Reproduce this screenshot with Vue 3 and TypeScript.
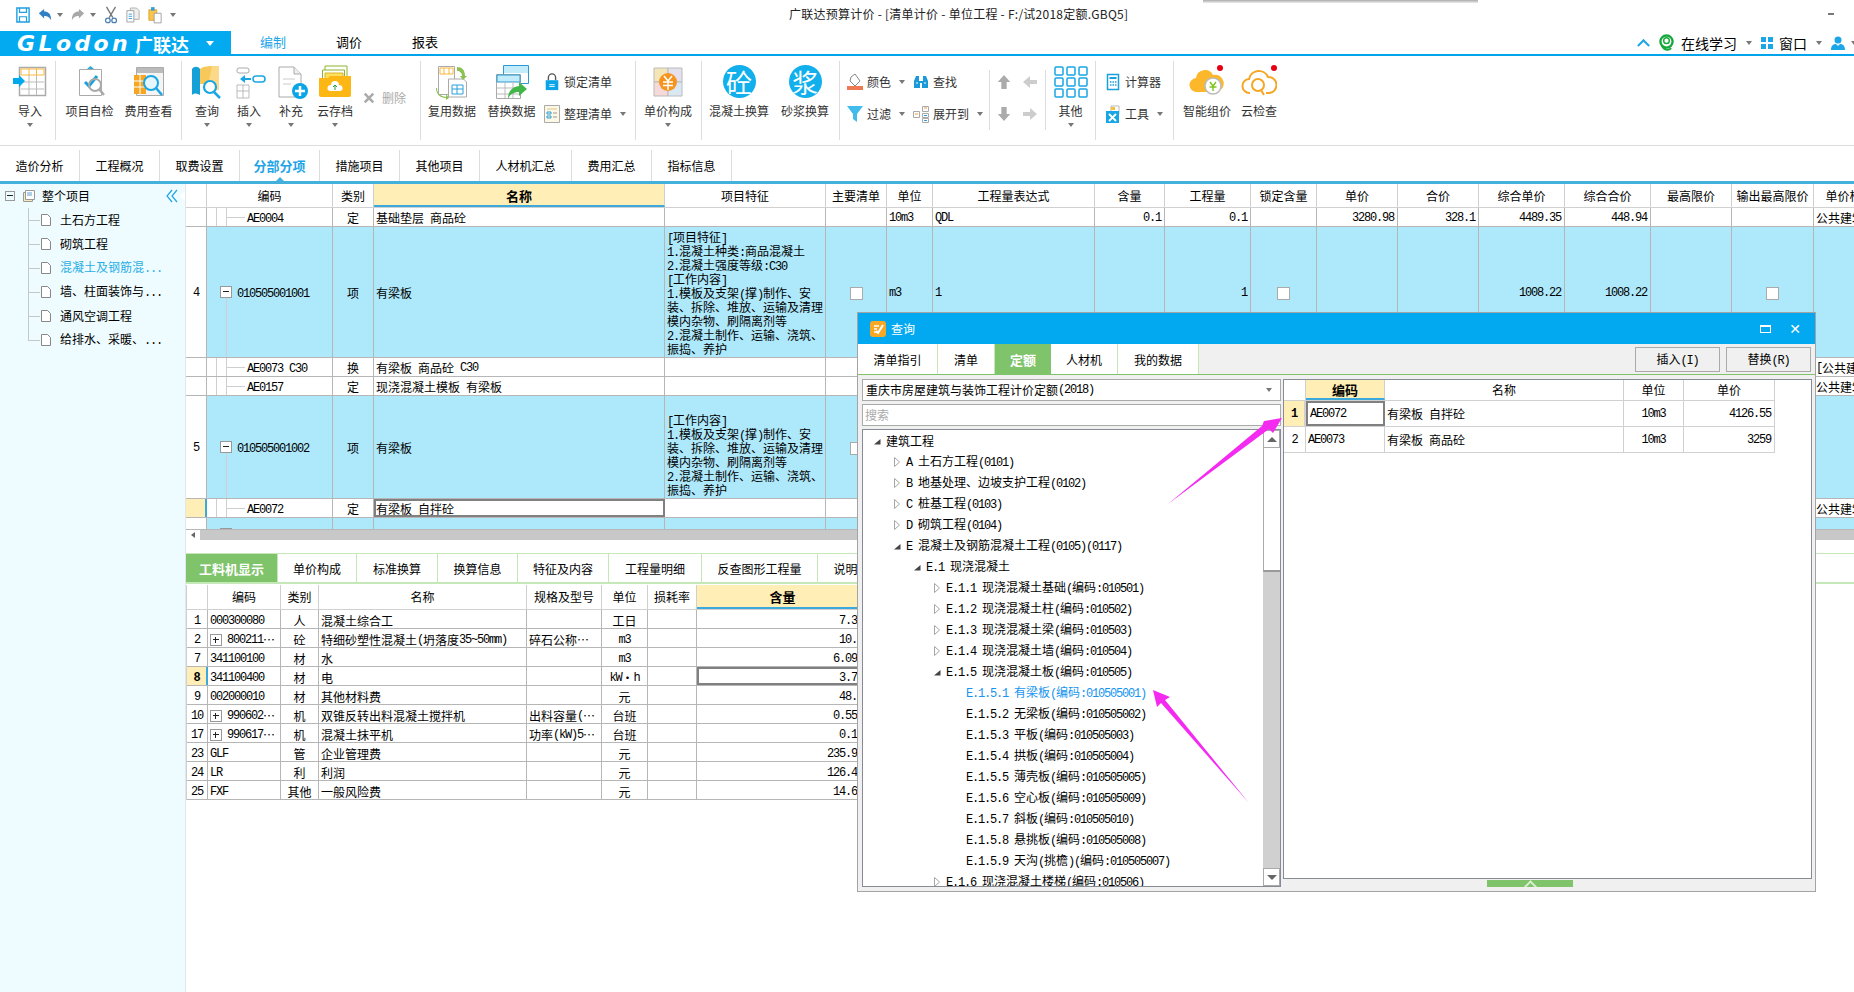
<template>
  <div class="app">
    <svg class="defs" aria-hidden="true">
      <symbol id="save" viewBox="0 0 16 18"><path d="M1 1h14v16H1z" fill="#fff" stroke="#1e9fe0" stroke-width="1.6"/><path d="M4 1v5h8V1M4 17v-6h8v6" fill="none" stroke="#1e9fe0" stroke-width="1.4"/></symbol>
      <symbol id="undo" viewBox="0 0 16 16"><path d="M1 6l6-5v3c5 0 8 3 8 10-2-4-4-5-8-5v3z" fill="#2f7fc4"/></symbol>
      <symbol id="redo" viewBox="0 0 16 16"><path d="M15 6L9 1v3C4 4 1 7 1 14c2-4 4-5 8-5v3z" fill="#a8a8a8"/></symbol>
      <symbol id="cut" viewBox="0 0 14 20"><path d="M2 1l7 12M12 1L5 13" stroke="#777" stroke-width="1.5" fill="none"/><circle cx="3.5" cy="16" r="2.6" fill="#fff" stroke="#4a7fb5" stroke-width="1.4"/><circle cx="10.5" cy="16" r="2.6" fill="#fff" stroke="#4a7fb5" stroke-width="1.4"/></symbol>
      <symbol id="copy" viewBox="0 0 16 18"><path d="M5 1h7l3 3v10H5z" fill="#eee" stroke="#aaa"/><path d="M1 4h8v13H1z" fill="#fff" stroke="#999"/><path d="M3 8h4M3 10.500h4M3 13h4" stroke="#2f9be0"/></symbol>
      <symbol id="paste" viewBox="0 0 16 20"><path d="M1 4h9v12H1z" fill="#fbc54a" stroke="#d9a02b"/><path d="M3.500 1h4v4h-4z" fill="#2f9be0"/><path d="M7 8h8v11H7z" fill="#fff" stroke="#999"/></symbol>

      <symbol id="r-import" viewBox="0 0 36 36"><path d="M7.500 3.500h26v28h-26z" fill="#fff" stroke="#aaa" stroke-width="1.500"/><path d="M9 5h23v6H9z" fill="#fff" stroke="#fbb83c"/><path d="M17 5v6M24.500 5v6" stroke="#fbb83c"/><path d="M9 18h23M9 25h23M17 11v20M24.500 11v20" stroke="#bbb"/><path d="M1 14h6v-3l6 6-6 6v-3H1z" fill="#00a9ee"/></symbol>
      <symbol id="r-check" viewBox="0 0 36 36"><path d="M7.500 5.500h22v26h-22z" fill="#fff" stroke="#aaa"/><path d="M15 5l3.500-3L22 5z" fill="#2aa9e0"/><path d="M13 18l4 4 8-10" fill="none" stroke="#18a0dc" stroke-width="3"/><circle cx="23" cy="21" r="6" fill="none" stroke="#aaa" stroke-width="2"/><path d="M27 25l5 6" stroke="#aaa" stroke-width="2.500"/></symbol>
      <symbol id="r-cost" viewBox="0 0 36 36"><path d="M5.500 3.500h27v28h-27z" fill="#f4f4f4" stroke="#aaa"/><path d="M6 4h26v5H6z" fill="#bbb"/><path d="M3 11h12v19H3z" fill="#f6a623"/><path d="M3 17h12M3 23h12M9 11v19" stroke="#fff"/><circle cx="20" cy="19" r="7" fill="#e6f6fd" stroke="#19a6e2" stroke-width="2"/><path d="M25 24l6 7" stroke="#19a6e2" stroke-width="2.500"/></symbol>
      <symbol id="r-book" viewBox="0 0 36 36"><path d="M3 5c2-3 6-3 8 0v26c-3-2-6-2-8 0z" fill="#16a0d8"/><path d="M11 5c3-3 10-3 12-3v18H11z" fill="#f7c95a"/><path d="M23 2h7v24H18z" fill="#fbd988"/><circle cx="21" cy="23" r="6" fill="#fff" stroke="#19a6e2" stroke-width="2.200"/><path d="M25 28l6 6" stroke="#19a6e2" stroke-width="2.500"/></symbol>
      <symbol id="r-insert" viewBox="0 0 36 36"><rect x="6" y="4" width="12" height="5" rx="2" fill="#fff" stroke="#aaa"/><path d="M6 21h12v13H6zM6 27h12M12 21v13" fill="#fff" stroke="#bbb"/><path d="M9 15l5-4v3h6v2h-6v3z" fill="#19a6e2"/><rect x="22" y="12" width="12" height="6" rx="3" fill="#fff" stroke="#19a6e2" stroke-width="1.500"/></symbol>
      <symbol id="r-add" viewBox="0 0 36 36"><path d="M6 3h15l7 7v23H6z" fill="#fff" stroke="#aaa"/><path d="M21 3v7h7" fill="#eee" stroke="#aaa"/><path d="M10 15h12M10 20h8" stroke="#ddd" stroke-width="1.500"/><circle cx="27" cy="27" r="8" fill="#0aa5e6"/><path d="M27 22v10M22 27h10" stroke="#fff" stroke-width="2.500"/></symbol>
      <symbol id="r-cloud" viewBox="0 0 36 36"><path d="M8 2h22v16H8z" fill="#fff" stroke="#8bb52c"/><path d="M5.500 6h22v14h-22z" fill="#fff" stroke="#8bb52c"/><path d="M8 9h18v12H8z" fill="#fde15d" stroke="#d8b52c"/><path d="M2 14h9l2-2h21v19c0 1-1 2-2 2H4c-1 0-2-1-2-2z" fill="#fdb714"/><path d="M13 27a3 3 0 0 1 1-6 4 4 0 0 1 8 0 3 3 0 0 1 1 6z" fill="#fff"/><path d="M18 26v-5M16 23l2-2 2 2" fill="none" stroke="#2a9d3c"/></symbol>
      <symbol id="r-reuse" viewBox="0 0 36 36"><path d="M4.500 2.500h16v28h-16z" fill="#fff" stroke="#aaa"/><path d="M6 4h13v6H6z" fill="#fff" stroke="#fbb83c"/><path d="M10 4v6M15 4v6" stroke="#fbb83c"/><path d="M14.500 15h15l3 3v15h-18z" fill="#fff" stroke="#aaa"/><path d="M18 21h11v9H18zM18 25h11M23 21v9" fill="none" stroke="#2aa1dc"/><path d="M23 3c5 0 8 3 8 9h2l-4 4-3-4h2c0-3-2-5-5-5z" fill="#8cc152"/><path d="M3 24c0 5 3 8 9 9v-3l3 4-3 2v-2c-6 0-10-4-10-10z" fill="#8cc152"/></symbol>
      <symbol id="r-replace" viewBox="0 0 36 36"><path d="M9.500 1.500h25v18h-25z" fill="#fff" stroke="#2c9ad2"/><path d="M10 2h24v7H10z" fill="#c2ecfa"/><path d="M2.500 10.500h24v24h-24z" fill="#fff" stroke="#aaa"/><path d="M3 11h23v7H3z" fill="#c2ecfa" stroke="#2c9ad2"/><path d="M3 24h23M3 30h23M11 18v16M19 18v16" stroke="#bbb"/><path d="M14 35c0-8 4-12 11-13v-4l8 7-8 7v-4c-5 0-9 2-11 7z" fill="#43b649"/></symbol>
      <symbol id="r-price" viewBox="0 0 36 36"><path d="M4 4h14v14H4z" fill="#f5e6b8" stroke="#bbb"/><path d="M18 4h14v14H18z" fill="#e5e0ee" stroke="#bbb"/><path d="M4 18h14v14H4z" fill="#f6d9d9" stroke="#bbb"/><path d="M18 18h14v14H18z" fill="#d9e8f3" stroke="#bbb"/><circle cx="18" cy="18" r="9" fill="#f7941d"/><path d="M14 12l4 5 4-5M13 18h10M13 21.500h10M18 17v9" fill="none" stroke="#fff" stroke-width="1.500"/></symbol>
      <symbol id="r-more" viewBox="0 0 36 36"><g fill="#fff" stroke="#18a6e6" stroke-width="1.500"><rect x="2" y="3" width="8" height="8" rx="1"/><rect x="14" y="3" width="8" height="8" rx="1"/><rect x="26" y="3" width="8" height="8" rx="1"/><rect x="2" y="14" width="8" height="8" rx="1"/><rect x="14" y="14" width="8" height="8" rx="1"/><rect x="26" y="14" width="8" height="8" rx="1"/><rect x="2" y="25" width="8" height="8" rx="1"/><rect x="14" y="25" width="8" height="8" rx="1"/><rect x="26" y="25" width="8" height="8" rx="1"/></g></symbol>
      <symbol id="r-smart" viewBox="0 0 36 36"><path d="M8 28a7 7 0 0 1-1-14 9 9 0 0 1 17-3 8 8 0 0 1 4 17z" fill="#fcb72a"/><circle cx="24" cy="22" r="8" fill="#fff" stroke="#bbb" stroke-width="1.500"/><path d="M21 18l3 4 3-4M20.500 23h7M24 22v5" fill="none" stroke="#7fc31c" stroke-width="1.400"/><circle cx="31" cy="4" r="3" fill="#e60012"/></symbol>
      <symbol id="r-ccheck" viewBox="0 0 36 36"><path d="M9 29a7 7 0 0 1-1-14 10 10 0 0 1 19-2 8 8 0 0 1 1 16h-3" fill="none" stroke="#f5a623" stroke-width="2"/><circle cx="17" cy="21" r="6" fill="none" stroke="#f5a623" stroke-width="2"/><path d="M20 26l3 5" stroke="#f5a623" stroke-width="2"/><circle cx="33" cy="4" r="3" fill="#e60012"/></symbol>

      <symbol id="s-lock" viewBox="0 0 16 20"><path d="M4 8V5a4 4 0 0 1 8 0v3" fill="none" stroke="#555" stroke-width="1.500"/><path d="M1 8h14v11H1z" fill="#0aa5e6"/><path d="M5 13h6M5 15h6" stroke="#fff"/></symbol>
      <symbol id="s-list" viewBox="0 0 16 18"><path d="M.5.500h15v17H.5z" fill="#fdf8e6" stroke="#aaa"/><path d="M3 4h10" stroke="#d9c98c"/><path d="M3 7h4v2H3zM3 11h4v2H3z" fill="none" stroke="#2a9fdc"/><path d="M9 8h4M9 12h4" stroke="#999"/></symbol>
      <symbol id="s-color" viewBox="0 0 16 18"><path d="M4 4l4-3 5 7-5 5-5-5z" fill="#fff" stroke="#888"/><path d="M0 13h16v4H0z" fill="#ef7a52"/></symbol>
      <symbol id="s-find" viewBox="0 0 16 16"><path d="M1 7l2-5h3v5h4V2h3l2 5v7h-6V9H7v5H1z" fill="#1a9bd7"/><path d="M3 9h2M11 9h2" stroke="#fff"/></symbol>
      <symbol id="s-filter" viewBox="0 0 16 18"><path d="M0 1h16l-6 8v8l-4-3V9z" fill="#3fbce9"/></symbol>
      <symbol id="s-expand" viewBox="0 0 16 18"><path d="M.5 6.500h6v6h-6zM9.500 1.500h6v5h-6zM9.500 8.500h6v4h-6zM9.500 13.500h6v4h-6z" fill="#fff" stroke="#aaa"/><path d="M2 9h3M11 3h3" stroke="#f29c38"/><path d="M11 10.500h3M11 15.500h3" stroke="#2a9fdc"/></symbol>
      <symbol id="s-calc" viewBox="0 0 16 18"><path d="M2.500 1.500h11v15h-11z" fill="#fff" stroke="#18a0dc" stroke-width="1.500"/><path d="M4.500 4h7v2h-7z" fill="#18a0dc"/><path d="M5 9h1.500M7.500 9H9M10 9h1.500M5 12h1.500M7.500 12H9M10 12h1.500" stroke="#18a0dc" stroke-width="1.500"/></symbol>
      <symbol id="s-tool" viewBox="0 0 16 18"><path d="M6 1h8v8H6z" fill="#fff" stroke="#bbb"/><path d="M6 2h4v3H6z" fill="#f6c23e"/><path d="M1 6h13v12H1z" fill="#18a6e6"/><path d="M4 9l7 7M11 9l-7 7" stroke="#fff" stroke-width="1.800"/></symbol>
      <symbol id="s-del" viewBox="0 0 14 14"><path d="M2 2l10 10M12 2L2 12" stroke="#aaa" stroke-width="3"/></symbol>
      <symbol id="a-up" viewBox="0 0 16 18"><path d="M8 1l7 8h-4v8H5V9H1z"/></symbol>
      <symbol id="a-down" viewBox="0 0 16 18"><path d="M8 17l7-8h-4V1H5v8H1z"/></symbol>
      <symbol id="a-left" viewBox="0 0 16 16"><path d="M1 8l7-6v4h7v4H8v4z"/></symbol>
      <symbol id="a-right" viewBox="0 0 16 16"><path d="M15 8L8 2v4H1v4h7v4z"/></symbol>

      <symbol id="headset" viewBox="0 0 16 18"><circle cx="8" cy="8" r="6.500" fill="none" stroke="#16a83a" stroke-width="2.500"/><circle cx="8" cy="7" r="3" fill="#fff" stroke="#16a83a" stroke-width="1.500"/><path d="M3 12c2 5 7 6 10 3" fill="none" stroke="#16a83a" stroke-width="2"/></symbol>
      <symbol id="user" viewBox="0 0 14 14"><circle cx="7" cy="4" r="3.500" fill="#1ba6e8"/><path d="M0 14c0-4 2-6 5-6l2 2 2-2c3 0 5 2 5 6z" fill="#1ba6e8"/></symbol>
      <symbol id="t-doc" viewBox="0 0 10 12"><path d="M.5.500h6l3 3v8h-9z" fill="#fff" stroke="#888"/></symbol>
      <symbol id="t-root" viewBox="0 0 12 12"><path d="M.5 2.500h9v9h-9z" fill="#f7e9bb" stroke="#999"/><path d="M2.500.500h9v9h-9z" fill="#fff" stroke="#999"/><path d="M4 3h5M4 5h5" stroke="#5a9fd0"/></symbol>
      <symbol id="t-fold" viewBox="0 0 12 14"><path d="M6 1L1 7l5 6M11 1L6 7l5 6" fill="none" stroke="#1fa5e6" stroke-width="1.200"/></symbol>
      <symbol id="tw-closed" viewBox="0 0 8 12"><path d="M1.500 1.500l5 4.500-5 4.500z" fill="#fff" stroke="#a6a6a6"/></symbol>
      <symbol id="tw-open" viewBox="0 0 8 12"><path d="M1 9.500L7.500 4v5.500z" fill="#444"/></symbol>
      <symbol id="query" viewBox="0 0 16 16"><rect width="16" height="16" rx="3" fill="#f9a825"/><path d="M4 5h5M4 8h3M4 11h3" stroke="#fff" stroke-width="1.500"/><path d="M6 10l2 2 5-8" fill="none" stroke="#fff" stroke-width="2"/></symbol>
    </svg>

    <header class="titlebar">
      <div class="qat">
        <svg class="qi"><use href="#save" /></svg>
        <svg class="qi tight"><use href="#undo" /></svg><i class="tri" />
        <svg class="qi tight"><use href="#redo" /></svg><i class="tri" />
        <svg class="qi"><use href="#cut" /></svg>
        <svg class="qi"><use href="#copy" /></svg>
        <svg class="qi"><use href="#paste" /></svg>
        <i class="tri" />
      </div>
      <div class="title">广联达预算计价 - [清单计价 - 单位工程 - F:/试2018定额.GBQ5]</div>
      <span class="minbtn" />
      <span class="win-shadow" />
    </header>

    <nav class="menubar">
      <div class="logo">
        <span class="logo-en">GLodon</span><span class="logo-cn">广联达</span><i class="tri white" />
      </div>
      <a class="mtab on">编制</a>
      <a class="mtab">调价</a>
      <a class="mtab">报表</a>
      <div class="mright">
        <span class="chev" />
        <svg class="mi"><use href="#headset" /></svg>
        <span class="ml">在线学习</span><i class="tri" />
        <span class="wingrid"><b /><b /><b /><b /></span>
        <span class="ml win">窗口</span><i class="tri" />
        <svg class="mi user"><use href="#user" /></svg><i class="tri" />
      </div>
    </nav>

    <section class="ribbon">
      <template v-for="(n, i) in ribbon" :key="i">
        <span v-if="n.type === 'gap'" :style="{ width: n.w + 'px' }" />
        <span v-else-if="n.type === 'sep'" class="sep" />
        <span v-else-if="n.type === 'short'" class="sep short" />
        <div v-else-if="n.type === 'big'" class="big" :style="{ width: n.w + 'px' }">
          <span v-if="n.glyph" class="disc">{{ n.glyph }}</span>
          <svg v-else class="bigi"><use :href="'#' + n.icon" /></svg>
          <span class="bl">{{ n.label }}</span>
          <i v-if="n.arrow" class="tri" />
        </div>
        <div v-else-if="n.type === 'stack'" class="stack" :style="{ width: n.w + 'px', paddingLeft: n.pad + 'px' }">
          <div v-for="s in n.rows" :key="s.label" class="sr">
            <svg class="si"><use :href="'#' + s.icon" /></svg>
            <span>{{ s.label }}</span>
            <i v-if="s.arrow" class="tri" />
          </div>
        </div>
        <div v-else-if="n.type === 'del'" class="del" :style="{ width: n.w + 'px' }">
          <svg class="xi"><use href="#s-del" /></svg><span>删除</span>
        </div>
        <div v-else class="arrows" :style="{ width: n.w + 'px' }">
          <svg class="ar dark"><use href="#a-up" /></svg>
          <svg class="ar"><use href="#a-left" /></svg>
          <svg class="ar dark"><use href="#a-down" /></svg>
          <svg class="ar"><use href="#a-right" /></svg>
        </div>
      </template>
    </section>

    <div class="pagetabs">
      <a v-for="t in pageTabs" :key="t" class="pt" :class="{ on: t === '分部分项', wide: t === '人材机汇总' }">{{ t }}</a>
    </div>

    <main class="main">
      <aside class="side">
        <div class="sroot">
          <span class="box minus" />
          <svg class="rooti"><use href="#t-root" /></svg>
          <span>整个项目</span>
          <svg class="collapse"><use href="#t-fold" /></svg>
          <span class="notch" />
        </div>
        <div v-for="s in sideItems" :key="s" class="schild" :class="{ on: s.startsWith('混凝土') }">
          <svg class="doci"><use href="#t-doc" /></svg>
          <span><T :t="s" /></span>
        </div>
      </aside>

      <div class="work">
        <div class="gridbox">
          <div class="grow head" :style="{ gridTemplateColumns: colTemplate }">
            <div v-for="c in cols" :key="c.k" class="hc" :class="{ hl: c.k === 'name' }">{{ c.label }}</div>
          </div>
          <div
            v-for="(r, ri) in rows"
            :key="ri"
            class="grow"
            :class="{ blue: r.blue, sel: r.sel }"
            :style="{ gridTemplateColumns: colTemplate, height: r.h + 'px' }">
            <div v-for="c in cols" :key="c.k" class="gc" :class="[c.cls, 'k-' + c.k]">
              <template v-if="c.k === 'code'">
                <template v-if="r.tree === 'head'">
                  <span class="box minus at-box" />
                  <span class="vl from-box" />
                </template>
                <template v-if="r.tree === 'child'">
                  <span class="inner" />
                  <span class="vl" />
                  <span class="hl-line" />
                </template>
                <span v-if="r.peek" class="peek" />
                <span :class="r.tree === 'child' ? 'pad-child' : 'pad-head'"><T :t="r.code || ''" /></span>
              </template>
              <div v-else-if="c.k === 'feat'" class="feat">
                <div v-for="l in r.feat" :key="l" class="fl"><T :t="l" /></div>
              </div>
              <span v-else-if="r.checks && r.checks.includes(c.k)" class="chk" />
              <T v-else :t="r[c.k] || ''" />
            </div>
          </div>
        </div>
        <div class="hbar"><span class="hbtn"><i /></span></div>

        <div class="subtabs">
          <a v-for="(t, i) in subTabs" :key="t.l" class="st" :class="{ on: i === 0 }" :style="{ width: t.w + 'px' }">{{ t.l }}</a>
        </div>

        <div class="subgrid">
          <div class="srow shead">
            <div v-for="h in subHead" :key="h" class="hc" :class="{ hl: h === '含量' }">{{ h }}</div>
          </div>
          <div v-for="r in subRows" :key="r.no" class="srow" :class="{ sel: r.no === '8' }">
            <div class="gc k-no"><T :t="r.no" /></div>
            <div class="gc sub-code">
              <span v-if="r.plus" class="box plus" />
              <T :t="r.code" />
            </div>
            <div class="gc center">{{ r.kind }}</div>
            <div class="gc"><T :t="r.name" /></div>
            <div class="gc"><T :t="r.spec || ''" /></div>
            <div class="gc center"><T :t="r.unit" /></div>
            <div class="gc" />
            <div class="gc right qty"><T :t="r.qty" /></div>
          </div>
        </div>
      </div>
    </main>

    <div class="dialog">
      <div class="dtitle">
        <svg class="dlogo"><use href="#query" /></svg>
        <span>查询</span>
        <span class="dmax" />
        <span class="dclose">✕</span>
      </div>
      <div class="dtabs">
        <a v-for="t in dlgTabs" :key="t.l" class="dt" :class="{ on: t.l === '定额' }" :style="{ width: t.w + 'px' }">{{ t.l }}</a>
        <button class="dbtn first"><T t="插入(I)" /></button>
        <button class="dbtn"><T t="替换(R)" /></button>
      </div>
      <div class="dbody">
        <div class="dleft">
          <div class="field"><T t="重庆市房屋建筑与装饰工程计价定额(2018)" /><i class="tri end" /></div>
          <div class="field ph">搜索</div>
          <div class="dtree">
            <div class="tlist">
              <div v-for="n in treeRows" :key="n.t" class="tr" :class="{ on: n.on }" :style="{ paddingLeft: 10 + n.lv * 20 + 'px' }">
                <svg class="tw"><use v-if="n.st" :href="'#tw-' + n.st" /></svg>
                <span><T :t="n.t" /></span>
              </div>
            </div>
            <div class="vbar">
              <span class="vbtn"><i class="up" /></span>
              <span class="vthumb" />
              <span class="vtrack" />
              <span class="vbtn"><i class="down" /></span>
            </div>
          </div>
        </div>
        <div class="dright">
          <div class="rpane">
            <div class="rrow rhead">
              <div class="hc" />
              <div class="hc hl">编码</div>
              <div class="hc">名称</div>
              <div class="hc">单位</div>
              <div class="hc">单价</div>
            </div>
            <div v-for="r in resultRows" :key="r.no" class="rrow rd" :class="{ sel: r.no === '1' }">
              <div class="gc k-no"><T :t="r.no" /></div>
              <div class="gc rc"><T :t="r.code" /></div>
              <div class="gc"><T :t="r.name" /></div>
              <div class="gc center"><T :t="r.unit" /></div>
              <div class="gc right"><T :t="r.price" /></div>
            </div>
          </div>
          <div class="handle"><span class="hchev" /></div>
        </div>
      </div>
    </div>

    <svg class="arrows-layer" viewBox="0 0 1854 992">
      <polygon points="1168,504 1262,426 1264,421 1282,418 1273,433 1269,429" fill="#f52af0" />
      <polygon points="1153,690 1170,697 1165,700 1249,803 1161,703 1157,707" fill="#f52af0" />
    </svg>
  </div>
</template>

<script setup lang="ts">
import { h } from 'vue';

// 宋体的西文是半角的，这里把西文单独包一层，用等宽字体凑宽度
const T = (p: { t: string }) =>
  p.t
    .split(/([\x20-\x7e]+)/)
    .filter(Boolean)
    .map((s) => (/^[\x20-\x7e]/.test(s) ? h('span', { class: 'lat' }, s) : s));

const ribbon: any[] = [
  { type: 'gap', w: 5 },
  { type: 'big', w: 50, label: '导入', icon: 'r-import', arrow: true },
  { type: 'sep' },
  { type: 'gap', w: 4 },
  { type: 'big', w: 59, label: '项目自检', icon: 'r-check' },
  { type: 'big', w: 59, label: '费用查看', icon: 'r-cost' },
  { type: 'gap', w: 3 },
  { type: 'sep' },
  { type: 'gap', w: 4 },
  { type: 'big', w: 42, label: '查询', icon: 'r-book', arrow: true },
  { type: 'big', w: 42, label: '插入', icon: 'r-insert', arrow: true },
  { type: 'big', w: 42, label: '补充', icon: 'r-add', arrow: true },
  { type: 'big', w: 46, label: '云存档', icon: 'r-cloud', arrow: true },
  { type: 'del', w: 62 },
  { type: 'sep' },
  { type: 'gap', w: 1 },
  { type: 'big', w: 60, label: '复用数据', icon: 'r-reuse' },
  { type: 'big', w: 59, label: '替换数据', icon: 'r-replace' },
  {
    type: 'stack',
    w: 94,
    pad: 3,
    rows: [
      { icon: 's-lock', label: '锁定清单' },
      { icon: 's-list', label: '整理清单', arrow: true }
    ]
  },
  { type: 'sep' },
  { type: 'gap', w: 2 },
  { type: 'big', w: 60, label: '单价构成', icon: 'r-price', arrow: true },
  { type: 'gap', w: 3 },
  { type: 'sep' },
  { type: 'gap', w: 3 },
  { type: 'big', w: 68, label: '混凝土换算', glyph: '砼' },
  { type: 'big', w: 64, label: '砂浆换算', glyph: '浆' },
  { type: 'gap', w: 2 },
  { type: 'sep' },
  { type: 'gap', w: 7 },
  {
    type: 'stack',
    w: 61,
    pad: 0,
    rows: [
      { icon: 's-color', label: '颜色', arrow: true },
      { icon: 's-filter', label: '过滤', arrow: true }
    ]
  },
  {
    type: 'stack',
    w: 81,
    pad: 5,
    rows: [
      { icon: 's-find', label: '查找' },
      { icon: 's-expand', label: '展开到', arrow: true }
    ]
  },
  { type: 'short' },
  { type: 'arrows', w: 55 },
  { type: 'short' },
  { type: 'big', w: 49, label: '其他', icon: 'r-more', arrow: true },
  { type: 'sep' },
  { type: 'gap', w: 9 },
  {
    type: 'stack',
    w: 68,
    pad: 0,
    rows: [
      { icon: 's-calc', label: '计算器' },
      { icon: 's-tool', label: '工具', arrow: true }
    ]
  },
  { type: 'sep' },
  { type: 'gap', w: 3 },
  { type: 'big', w: 60, label: '智能组价', icon: 'r-smart' },
  { type: 'big', w: 44, label: '云检查', icon: 'r-ccheck' }
];

const pageTabs = ['造价分析', '工程概况', '取费设置', '分部分项', '措施项目', '其他项目', '人材机汇总', '费用汇总', '指标信息'];

const sideItems = ['土石方工程', '砌筑工程', '混凝土及钢筋混...', '墙、柱面装饰与...', '通风空调工程', '给排水、采暖、...'];

const cols = [
  { k: 'no', w: 21, label: '', cls: 'center' },
  { k: 'code', w: 126, label: '编码', cls: '' },
  { k: 'kind', w: 41, label: '类别', cls: 'center' },
  { k: 'name', w: 291, label: '名称', cls: '' },
  { k: 'feat', w: 161, label: '项目特征', cls: '' },
  { k: 'main', w: 61, label: '主要清单', cls: 'center' },
  { k: 'unit', w: 46, label: '单位', cls: '' },
  { k: 'expr', w: 162, label: '工程量表达式', cls: '' },
  { k: 'qty', w: 70, label: '含量', cls: 'right' },
  { k: 'amt', w: 86, label: '工程量', cls: 'right' },
  { k: 'lock', w: 66, label: '锁定含量', cls: 'center' },
  { k: 'price', w: 81, label: '单价', cls: 'right' },
  { k: 'sum', w: 81, label: '合价', cls: 'right' },
  { k: 'cp', w: 86, label: '综合单价', cls: 'right' },
  { k: 'cs', w: 86, label: '综合合价', cls: 'right' },
  { k: 'maxp', w: 81, label: '最高限价', cls: 'right' },
  { k: 'outp', w: 82, label: '输出最高限价', cls: 'center' },
  { k: 'tpl', w: 96, label: '单价构成文件', cls: '' }
];
const colTemplate = cols.map((c) => c.w + 'px').join(' ');

const workLines = ['[工作内容]', '1.模板及支架(撑)制作、安', '装、拆除、堆放、运输及清理', '模内杂物、刷隔离剂等', '2.混凝土制作、运输、浇筑、', '振捣、养护'];

const rows: any[] = [
  { h: 19, tree: 'child', code: 'AE0004', kind: '定', name: '基础垫层 商品砼', unit: '10m3', expr: 'QDL', qty: '0.1', amt: '0.1', price: '3280.98', sum: '328.1', cp: '4489.35', cs: '448.94', tpl: '公共建筑工程' },
  {
    h: 131,
    blue: true,
    tree: 'head',
    no: '4',
    code: '010505001001',
    kind: '项',
    name: '有梁板',
    feat: ['[项目特征]', '1.混凝土种类:商品混凝土', '2.混凝土强度等级:C30', ...workLines],
    unit: 'm3',
    expr: '1',
    amt: '1',
    cp: '1008.22',
    cs: '1008.22',
    checks: ['main', 'lock', 'outp']
  },
  { h: 19, tree: 'child', code: 'AE0073 C30', kind: '换', name: '有梁板 商品砼 C30', tpl: '[公共建筑工程' },
  { h: 19, tree: 'child', code: 'AE0157', kind: '定', name: '现浇混凝土模板 有梁板', tpl: '公共建筑工程' },
  { h: 103, blue: true, tree: 'head', no: '5', code: '010505001002', kind: '项', name: '有梁板', feat: workLines, checks: ['main'] },
  { h: 19, sel: true, tree: 'child', code: 'AE0072', kind: '定', name: '有梁板 自拌砼', tpl: '公共建筑工程' },
  { h: 12, blue: true, peek: true }
];

const subTabs = [
  { l: '工料机显示', w: 92 },
  { l: '单价构成', w: 79 },
  { l: '标准换算', w: 81 },
  { l: '换算信息', w: 80 },
  { l: '特征及内容', w: 91 },
  { l: '工程量明细', w: 93 },
  { l: '反查图形工程量', w: 116 },
  { l: '说明信息', w: 80 }
];

const subHead = ['', '编码', '类别', '名称', '规格及型号', '单位', '损耗率', '含量'];

const subRows: any[] = [
  { no: '1', code: '000300080', kind: '人', name: '混凝土综合工', unit: '工日', qty: '7.3' },
  { no: '2', plus: true, code: '800211…', kind: '砼', name: '特细砂塑性混凝土(坍落度35~50mm)', spec: '碎石公称…', unit: 'm3', qty: '10.' },
  { no: '7', code: '341100100', kind: '材', name: '水', unit: 'm3', qty: '6.09' },
  { no: '8', code: '341100400', kind: '材', name: '电', unit: 'kW·h', qty: '3.7' },
  { no: '9', code: '002000010', kind: '材', name: '其他材料费', unit: '元', qty: '48.' },
  { no: '10', plus: true, code: '990602…', kind: '机', name: '双锥反转出料混凝土搅拌机', spec: '出料容量(…', unit: '台班', qty: '0.55' },
  { no: '17', plus: true, code: '990617…', kind: '机', name: '混凝土抹平机', spec: '功率(kW)5…', unit: '台班', qty: '0.1' },
  { no: '23', code: 'GLF', kind: '管', name: '企业管理费', unit: '元', qty: '235.9' },
  { no: '24', code: 'LR', kind: '利', name: '利润', unit: '元', qty: '126.4' },
  { no: '25', code: 'FXF', kind: '其他', name: '一般风险费', unit: '元', qty: '14.6' }
];

const dlgTabs = [
  { l: '清单指引', w: 80 },
  { l: '清单', w: 57 },
  { l: '定额', w: 56 },
  { l: '人材机', w: 67 },
  { l: '我的数据', w: 81 }
];

const treeRows: any[] = [
  { t: '建筑工程', lv: 0, st: 'open' },
  { t: 'A 土石方工程(0101)', lv: 1, st: 'closed' },
  { t: 'B 地基处理、边坡支护工程(0102)', lv: 1, st: 'closed' },
  { t: 'C 桩基工程(0103)', lv: 1, st: 'closed' },
  { t: 'D 砌筑工程(0104)', lv: 1, st: 'closed' },
  { t: 'E 混凝土及钢筋混凝土工程(0105)(0117)', lv: 1, st: 'open' },
  { t: 'E.1 现浇混凝土', lv: 2, st: 'open' },
  { t: 'E.1.1 现浇混凝土基础(编码:010501)', lv: 3, st: 'closed' },
  { t: 'E.1.2 现浇混凝土柱(编码:010502)', lv: 3, st: 'closed' },
  { t: 'E.1.3 现浇混凝土梁(编码:010503)', lv: 3, st: 'closed' },
  { t: 'E.1.4 现浇混凝土墙(编码:010504)', lv: 3, st: 'closed' },
  { t: 'E.1.5 现浇混凝土板(编码:010505)', lv: 3, st: 'open' },
  { t: 'E.1.5.1 有梁板(编码:010505001)', lv: 4, on: true },
  { t: 'E.1.5.2 无梁板(编码:010505002)', lv: 4 },
  { t: 'E.1.5.3 平板(编码:010505003)', lv: 4 },
  { t: 'E.1.5.4 拱板(编码:010505004)', lv: 4 },
  { t: 'E.1.5.5 薄壳板(编码:010505005)', lv: 4 },
  { t: 'E.1.5.6 空心板(编码:010505009)', lv: 4 },
  { t: 'E.1.5.7 斜板(编码:010505010)', lv: 4 },
  { t: 'E.1.5.8 悬挑板(编码:010505008)', lv: 4 },
  { t: 'E.1.5.9 天沟(挑檐)(编码:010505007)', lv: 4 },
  { t: 'E.1.6 现浇混凝土楼梯(编码:010506)', lv: 3, st: 'closed' }
];

const resultRows = [
  { no: '1', code: 'AE0072', name: '有梁板 自拌砼', unit: '10m3', price: '4126.55' },
  { no: '2', code: 'AE0073', name: '有梁板 商品砼', unit: '10m3', price: '3259' }
];
</script>

<style>
html,
body {
  margin: 0;
  background: #fff;
}

.lat {
  font-family: "Liberation Mono", monospace;
  font-size: 12px;
  letter-spacing: -1.2px;
  white-space: pre;
}
</style>

<style scoped>
.app {
  position: relative;
  width: 1854px;
  height: 992px;
  overflow: hidden;
  display: flex;
  flex-direction: column;
  background: #fff;
  color: #000;
  font: 12px/14px "Noto Sans CJK SC", sans-serif;
}

.defs {
  display: block;
  width: 0;
  height: 0;
  overflow: hidden;
}

.tri {
  display: inline-block;
  width: 0;
  height: 0;
  border-left: 3px solid transparent;
  border-right: 3px solid transparent;
  border-top: 4px solid #777;
}

.tri.white {
  border-left-width: 4px;
  border-right-width: 4px;
  border-top: 5px solid #fff;
  margin-left: 17px;
}

/* 标题栏 */
.titlebar {
  position: relative;
  height: 31px;
  flex: none;
  display: flex;
  align-items: center;
}

.qat {
  width: 789px;
  flex: none;
  padding: 0 0 2px 16px;
  box-sizing: border-box;
  display: flex;
  align-items: center;
}

.qi {
  width: 14px;
  height: 18px;
  margin-right: 8px;
}

.qi.tight {
  margin-right: 5px;
}

.qat .tri {
  margin-right: 8px;
}

.title {
  color: #222;
  padding-bottom: 3px;
  letter-spacing: 0.25px;
}

.minbtn {
  margin-left: auto;
  margin-right: 20px;
  margin-bottom: 3px;
  width: 6px;
  height: 2px;
  background: #777;
}

.win-shadow {
  position: absolute;
  left: 1203px;
  top: 0;
  width: 275px;
  height: 3px;
  background: linear-gradient(#aaa, #eee);
}

/* 菜单 */
.menubar {
  height: 25px;
  flex: none;
  box-sizing: border-box;
  border-bottom: 2px solid #00a5ec;
  display: flex;
}

.logo {
  width: 231px;
  height: 25px;
  flex: none;
  background: #03aaef;
  color: #fff;
  display: flex;
  align-items: center;
  padding-left: 17px;
  box-sizing: border-box;
}

.logo-en {
  font: italic bold 22px/24px "DejaVu Sans", sans-serif;
  letter-spacing: 3.4px;
  width: 118px;
  overflow: hidden;
}

.logo-cn {
  font-size: 18px;
  font-weight: 700;
  line-height: 24px;
  white-space: nowrap;
}

.mtab {
  width: 76px;
  text-align: center;
  font-size: 13px;
  line-height: 22px;
}

.mtab.on {
  margin-left: 4px;
  color: #1fa5e6;
  border-bottom: 2px solid #00a5ec;
  height: 23px;
}

.mright {
  margin-left: auto;
  margin-right: -3px;
  display: flex;
  align-items: center;
  height: 23px;
  font-size: 13px;
}

.chev {
  width: 7px;
  height: 7px;
  border-left: 2px solid #1fa5e6;
  border-top: 2px solid #1fa5e6;
  transform: rotate(45deg) translate(2px, 2px);
  margin-right: 11px;
}

.mi {
  width: 15px;
  height: 17px;
}

.ml {
  margin: 0 9px 0 7px;
  width: 56px;
  white-space: nowrap;
  font-size: 14px;
}

.wingrid {
  display: grid;
  grid-template-columns: 5px 5px;
  gap: 2px;
  margin: 0 0 0 9px;
}

.wingrid b {
  width: 5px;
  height: 5px;
  background: #1ba6e8;
}

.ml.win {
  width: 28px;
  margin-left: 6px;
}

.mi.user {
  width: 14px;
  height: 14px;
  margin: 0 6px 0 9px;
}

/* 功能区 */
.ribbon {
  height: 90px;
  flex: none;
  box-sizing: border-box;
  border-bottom: 1px solid #ddd;
  display: flex;
  color: #333;
}

.sep {
  width: 1px;
  height: 79px;
  margin-top: 5px;
  background: #ddd;
  flex: none;
}

.sep.short {
  height: 60px;
  margin-top: 14px;
}

.big {
  flex: none;
  display: flex;
  flex-direction: column;
  align-items: center;
  padding-top: 8px;
  box-sizing: border-box;
  white-space: nowrap;
}

.bigi {
  width: 36px;
  height: 36px;
}

.disc {
  width: 33px;
  height: 33px;
  margin: 1px 0 2px;
  border-radius: 50%;
  background: #11afec;
  color: #fff;
  font-size: 26px;
  line-height: 33px;
  text-align: center;
}

.bl {
  margin-top: 4px;
}

.big .tri {
  margin-top: 5px;
}

.stack {
  flex: none;
  box-sizing: border-box;
  padding-top: 14px;
  display: flex;
  flex-direction: column;
  gap: 8px;
}

.sr {
  height: 24px;
  display: flex;
  align-items: center;
  white-space: nowrap;
}

.si {
  width: 16px;
  height: 18px;
  margin-right: 4px;
  flex: none;
}

.sr .tri {
  margin-left: 8px;
}

.del {
  flex: none;
  box-sizing: border-box;
  padding: 0 0 0 5px;
  height: 84px;
  display: flex;
  align-items: center;
  color: #aaa;
}

.xi {
  width: 12px;
  height: 12px;
  margin-right: 7px;
}

.arrows {
  flex: none;
  box-sizing: border-box;
  padding: 14px 0 0 6px;
  display: grid;
  grid-template-columns: 26px 26px;
  grid-auto-rows: 24px;
  row-gap: 8px;
  align-items: center;
}

.ar {
  width: 16px;
  height: 16px;
  fill: #cdcdcd;
}

.ar.dark {
  fill: #ababab;
}

/* 页签 */
.pagetabs {
  height: 38px;
  flex: none;
  box-sizing: border-box;
  padding-top: 4px;
  border-bottom: 3px solid #44b0dc;
  display: flex;
}

.pt {
  position: relative;
  width: 80px;
  box-sizing: border-box;
  border-right: 1px solid #ddd;
  text-align: center;
  line-height: 31px;
  white-space: nowrap;
}

.pt.wide {
  width: 92px;
}

.pt.on {
  color: #1fa5e6;
  font-weight: 700;
  font-size: 13px;
}

.pt.on::after {
  content: '';
  position: absolute;
  left: 36px;
  bottom: 0;
  border-left: 4px solid transparent;
  border-right: 4px solid transparent;
  border-bottom: 4px solid #44b0dc;
}

.main {
  flex: 1;
  display: flex;
  min-height: 0;
}

/* 左侧树 */
.side {
  width: 186px;
  flex: none;
  box-sizing: border-box;
  background: #effcff;
  border-right: 1px solid #e2e8ea;
}

.sroot {
  position: relative;
  height: 24px;
  display: flex;
  align-items: center;
  padding-left: 5px;
}

.box {
  display: inline-block;
  position: relative;
  width: 12px;
  height: 12px;
  box-sizing: border-box;
  border: 1px solid #999;
  background: #fff;
  flex: none;
}

.box::before {
  content: '';
  position: absolute;
  left: 2px;
  top: 4px;
  width: 6px;
  height: 1px;
  background: #222;
}

.box.plus::after {
  content: '';
  position: absolute;
  left: 4px;
  top: 2px;
  width: 1px;
  height: 6px;
  background: #222;
}

.sroot .box {
  width: 10px;
  height: 10px;
  background: transparent;
}

.sroot .box::before {
  left: 1px;
  top: 3px;
}

.rooti {
  width: 12px;
  height: 12px;
  margin: 0 7px 0 8px;
}

.collapse {
  position: absolute;
  left: 166px;
  top: 5px;
  width: 12px;
  height: 14px;
}

.notch {
  position: absolute;
  right: 0;
  top: 7px;
  border-top: 5px solid transparent;
  border-bottom: 5px solid transparent;
  border-right: 5px solid #fff;
}

.schild {
  position: relative;
  height: 24px;
  display: flex;
  align-items: center;
  padding-left: 41px;
  white-space: nowrap;
}

.schild::before {
  content: '';
  position: absolute;
  left: 28px;
  top: 0;
  bottom: 0;
  border-left: 1px solid #c4c8ca;
}

.schild:last-child::before {
  bottom: 12px;
}

.schild::after {
  content: '';
  position: absolute;
  left: 28px;
  width: 12px;
  top: 12px;
  border-top: 1px solid #c4c8ca;
}

.schild.on {
  color: #28aee6;
}

.doci {
  width: 10px;
  height: 12px;
  margin-right: 9px;
}

/* 表格 */
.work {
  flex: 1;
  min-width: 0;
  overflow: hidden;
}

.gridbox {
  overflow: hidden;
}

.grow {
  display: grid;
  box-sizing: border-box;
  border-bottom: 1px solid #b6b6b6;
}

.grow.head {
  height: 24px;
  border-bottom: 1px solid #d0d0d0;
}

.hc {
  box-sizing: border-box;
  border-right: 1px solid #d0d0d0;
  text-align: center;
  line-height: 23px;
  white-space: nowrap;
  overflow: hidden;
}

.hc.hl {
  background: #ffeeb5;
  border-bottom: 2px solid #3ca9dc;
  font-weight: 700;
  font-size: 13px;
}

.gc {
  position: relative;
  box-sizing: border-box;
  border-right: 1px solid #b6b6b6;
  padding: 2px 2px 0;
  display: flex;
  align-items: center;
  white-space: nowrap;
  overflow: hidden;
}

.gc.center {
  justify-content: center;
}

.gc.right {
  justify-content: flex-end;
  padding-right: 3px;
}

.blue .gc {
  background: #aee8fb;
}

.blue .k-no {
  background: #fff;
}

.gc.k-no {
  justify-content: center;
  padding: 2px 0 0;
}

.sel .k-no {
  background: #ffeeb5;
  border-right: 2px solid #3ca9dc;
  font-weight: 700;
}

.sel .k-name,
.sel .qty,
.sel .rc {
  outline: 2px solid #808080;
  outline-offset: -2px;
  z-index: 1;
}

.rd.sel .rc {
  border-left: 2px solid #3ca9dc;
}

.inner {
  position: absolute;
  left: 9px;
  top: 0;
  bottom: 0;
  border-left: 1px solid #cfcfcf;
}

.vl {
  position: absolute;
  left: 19px;
  top: 0;
  bottom: 0;
  border-left: 1px solid #cfcfcf;
}

.vl.from-box {
  top: 50%;
}

.hl-line {
  position: absolute;
  left: 19px;
  width: 19px;
  top: 50%;
  border-top: 1px solid #cfcfcf;
}

.at-box {
  position: absolute;
  left: 13px;
  top: 50%;
  margin-top: -6px;
  z-index: 1;
}

.peek {
  position: absolute;
  left: 13px;
  bottom: 0;
  width: 12px;
  height: 1px;
  background: #999;
}

.pad-child {
  padding-left: 38px;
}

.pad-head {
  padding-left: 28px;
}

.feat {
  align-self: flex-end;
  padding-bottom: 1px;
}

.fl {
  height: 14px;
  line-height: 14px;
}

.chk {
  width: 11px;
  height: 11px;
  background: #fff;
  border: 1px solid #aaa;
}

.hbar {
  height: 10px;
  background: #c8c8c8;
}

.hbtn {
  display: block;
  width: 14px;
  height: 10px;
  background: #fff;
  position: relative;
}

.hbtn i {
  position: absolute;
  left: 5px;
  top: 2px;
  border-top: 3px solid transparent;
  border-bottom: 3px solid transparent;
  border-right: 4px solid #666;
}

/* 下方 */
.subtabs {
  margin-top: 13px;
  height: 31px;
  box-sizing: border-box;
  border-top: 1px solid #c5e8b8;
  border-bottom: 2px solid #c5e8b8;
  display: flex;
}

.st {
  flex: none;
  box-sizing: border-box;
  border-right: 1px solid #c5e8b8;
  text-align: center;
  line-height: 30px;
  white-space: nowrap;
  overflow: hidden;
}

.st.on {
  background: #7fc36b;
  color: #fff;
  font-size: 13px;
  font-weight: 700;
}

.subgrid {
  margin-top: 1px;
  width: 683px;
  border-left: 1px solid #d0d0d0;
  box-sizing: border-box;
}

.srow {
  display: grid;
  grid-template-columns: 21px 73px 38px 208px 75px 46px 49px 172px;
  height: 19px;
  box-sizing: border-box;
  border-bottom: 1px solid #b6b6b6;
}

.srow .gc {
  padding-top: 3px;
}

.srow.shead {
  height: 25px;
  border-bottom: 1px solid #d0d0d0;
}

.shead .hc {
  line-height: 24px;
}

.sub-code .plus {
  margin-right: 5px;
  width: 12px;
}

.gc.right.qty {
  border-right: 0;
  padding-right: 12px;
}

/* 查询对话框 */
.dialog {
  position: absolute;
  left: 857px;
  top: 312px;
  width: 959px;
  height: 580px;
  box-sizing: border-box;
  border: 1px solid #a4a4a4;
  background: #f0f0f0;
  display: flex;
  flex-direction: column;
  z-index: 2;
}

.dtitle {
  height: 31px;
  flex: none;
  background: #03a9f0;
  color: #fff;
  display: flex;
  align-items: center;
  padding-left: 12px;
}

.dlogo {
  width: 16px;
  height: 16px;
  margin-right: 5px;
}

.dmax {
  margin-left: auto;
  width: 11px;
  height: 8px;
  box-sizing: border-box;
  border: 1px solid #fff;
  border-top-width: 2px;
}

.dclose {
  margin: 0 14px 0 18px;
  font: bold 14px/14px "DejaVu Sans", sans-serif;
}

.dtabs {
  height: 31px;
  flex: none;
  box-sizing: border-box;
  border-bottom: 1px solid #7fc36b;
  display: flex;
  align-items: flex-start;
}

.dt {
  height: 30px;
  flex: none;
  box-sizing: border-box;
  background: #fff;
  border-right: 1px solid #c5e8b8;
  text-align: center;
  line-height: 32px;
}

.dt.on {
  background: #7fc36b;
  color: #fff;
  font-weight: 700;
  font-size: 13px;
  border-right: 0;
}

.dbtn {
  margin: 3px 0 0 6px;
  width: 85px;
  height: 25px;
  background: #f0f0f0;
  border: 1px solid #aaa;
  font: inherit;
  padding: 0;
  color: #000;
}

.dbtn.first {
  margin-left: auto;
}

.dbtn:last-of-type {
  margin-right: 4px;
}

.dbody {
  flex: 1;
  min-height: 0;
  display: flex;
  gap: 2px;
  padding: 4px 3px 4px 4px;
}

.dleft {
  width: 419px;
  flex: none;
  display: flex;
  flex-direction: column;
  gap: 3px;
}

.field {
  height: 22px;
  flex: none;
  box-sizing: border-box;
  border: 1px solid #aaa;
  background: #fff;
  padding: 0 3px;
  display: flex;
  align-items: center;
}

.field.ph {
  color: #aaa;
  padding: 0 2px;
}

.tri.end {
  margin-left: auto;
  margin-right: 5px;
}

.dtree {
  flex: 1;
  min-height: 0;
  box-sizing: border-box;
  border: 1px solid #868b96;
  background: #fff;
  display: flex;
}

.tlist {
  flex: 1;
  overflow: hidden;
}

.tr {
  height: 21px;
  display: flex;
  align-items: center;
  white-space: nowrap;
}

.tr.on {
  color: #1494f0;
}

.tw {
  width: 8px;
  height: 12px;
  margin-right: 5px;
  flex: none;
}

.vbar {
  width: 17px;
  flex: none;
  display: flex;
  flex-direction: column;
}

.vbtn {
  height: 18px;
  flex: none;
  box-sizing: border-box;
  border: 1px solid #aaa;
  background: #fff;
  display: flex;
  align-items: center;
  justify-content: center;
}

.vbtn i {
  border-left: 5px solid transparent;
  border-right: 5px solid transparent;
}

.vbtn i.up {
  border-bottom: 5px solid #666;
}

.vbtn i.down {
  border-top: 5px solid #666;
}

.vthumb {
  height: 124px;
  flex: none;
  box-sizing: border-box;
  background: #fff;
  border-left: 1px solid #aaa;
  border-bottom: 2px solid #999;
}

.vtrack {
  flex: 1;
  background: #d0d0d0;
}

.dright {
  flex: 1;
  min-width: 0;
  display: flex;
  flex-direction: column;
}

.rpane {
  flex: 1;
  box-sizing: border-box;
  border: 1px solid #868b96;
  background: #fff;
}

.rrow {
  display: grid;
  grid-template-columns: 22px 79px 239px 60px 91px;
  width: 491px;
  box-sizing: border-box;
  border-bottom: 1px solid #d0d0d0;
}

.rhead {
  height: 21px;
}

.rhead .hc {
  line-height: 19px;
}

.rd {
  height: 26px;
}

.rd .gc {
  border-right-color: #d0d0d0;
  padding-top: 0;
}

.handle {
  height: 7px;
  width: 86px;
  margin: 1px 0 0 204px;
  flex: none;
  background: #7fc36b;
  display: flex;
  justify-content: center;
  overflow: hidden;
}

.hchev {
  width: 7px;
  height: 7px;
  margin-top: 2px;
  border-left: 2px solid #d8f0d0;
  border-top: 2px solid #d8f0d0;
  transform: rotate(45deg);
}

.arrows-layer {
  position: absolute;
  left: 0;
  top: 0;
  width: 1854px;
  height: 992px;
  z-index: 3;
  pointer-events: none;
}
</style>
